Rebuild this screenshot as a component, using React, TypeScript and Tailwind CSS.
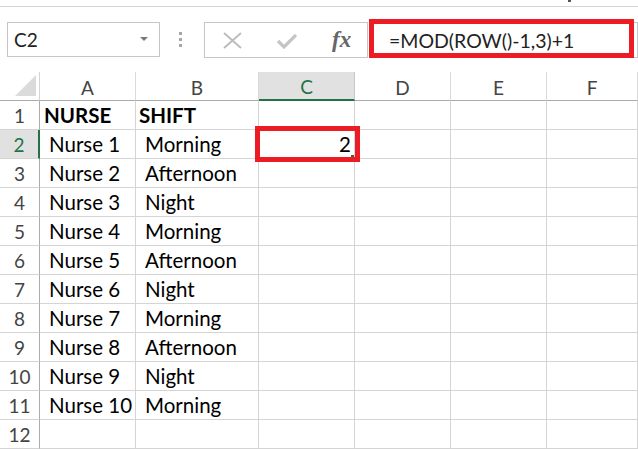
import React from "react";

const cols = [
  { key: "A", w: "w-[96px]" },
  { key: "B", w: "w-[123px]" },
  { key: "C", w: "w-[96px]" },
  { key: "D", w: "w-[96px]" },
  { key: "E", w: "w-[96px]" },
  { key: "F", w: "flex-1" },
];

const data: [string, string][] = [
  ["Nurse 1", "Morning"],
  ["Nurse 2", "Afternoon"],
  ["Nurse 3", "Night"],
  ["Nurse 4", "Morning"],
  ["Nurse 5", "Afternoon"],
  ["Nurse 6", "Night"],
  ["Nurse 7", "Morning"],
  ["Nurse 8", "Afternoon"],
  ["Nurse 9", "Night"],
  ["Nurse 10", "Morning"],
];

function RowHeader({ n, selected }: { n: number; selected?: boolean }) {
  return selected ? (
    <div className="w-[40px] shrink-0 h-full bg-[#e1e1e1] border-r-2 border-r-[#217346] border-b border-b-[#d4d4d4] flex items-center justify-center text-[19px] text-[#217346] pt-[3px]">
      {n}
    </div>
  ) : (
    <div className="w-[40px] shrink-0 h-full border-r border-r-[#ababab] border-b border-b-[#d4d4d4] flex items-center justify-center text-[19px] text-[#444444] pt-[3px]">
      {n}
    </div>
  );
}

export default function App() {
  return (
    <div
      className="relative w-[638px] h-[449px] bg-white overflow-hidden"
      style={{ fontFamily: "Lato, 'Open Sans', sans-serif" }}
    >
      <div className="absolute left-[568px] top-0 w-[3px] h-[2px] bg-[#555555]" />
      <div className="h-[6px]" />
      <div className="h-px bg-[#d5d5d5]" />

      {/* formula bar row */}
      <div className="mt-[15px] flex items-start">
        <div className="ml-[7px] w-[153px] h-[35px] border border-[#c6c6c6] flex items-center justify-between pl-[6px] pr-[11px]">
          <span className="text-[19px] text-[#222] pt-[2px]">C2</span>
          <svg width="8" height="5" viewBox="0 0 8 5">
            <path d="M0 0 L8 0 L4 4 Z" fill="#7a7a7a" />
          </svg>
        </div>
        <div className="ml-[19px] mt-[10px] flex flex-col gap-[3px]">
          <div className="w-[3px] h-[3px] bg-[#a6a6a6]" />
          <div className="w-[3px] h-[3px] bg-[#a6a6a6]" />
          <div className="w-[3px] h-[3px] bg-[#a6a6a6]" />
        </div>
        <div className="ml-[22px] w-[164px] h-[36px] border border-[#c6c6c6] flex items-center">
          <svg className="ml-[18px]" width="19" height="17" viewBox="0 0 19 17">
            <path d="M1 1 L18 16 M18 1 L1 16" stroke="#bdbdbd" strokeWidth="2" fill="none" />
          </svg>
          <svg className="ml-[35px] mt-[3px]" width="20" height="15" viewBox="0 0 20 15">
            <path d="M1 7 L7 13 L19 1" stroke="#c4c4c4" strokeWidth="3.2" fill="none" />
          </svg>
          <span
            className="ml-[35px] text-[23px] italic font-bold text-[#666666] leading-none pb-[2px]"
            style={{ fontFamily: "'Liberation Serif', 'DejaVu Serif', serif" }}
          >
            fx
          </span>
        </div>
        <div className="ml-px w-[269px] h-[36px] border border-[#c6c6c6] flex items-center pl-[19px]">
          <span className="text-[19.5px] text-[#222] pt-[2px]">=MOD(ROW()-1,3)+1</span>
        </div>
      </div>

      {/* grid */}
      <div className="mt-[14px]">
        {/* column header */}
        <div className="flex h-[29px]">
          <div className="w-[40px] shrink-0 h-full border-r border-r-[#d4d4d4] border-b border-b-[#ababab] relative">
            <svg className="absolute left-[15px] top-[3px]" width="21" height="22" viewBox="0 0 21 22">
              <path d="M21 0 L21 21 L0 21 Z" fill="#dbdbdb" />
            </svg>
          </div>
          {cols.map((c) =>
            c.key === "C" ? (
              <div
                key={c.key}
                className={`${c.w} shrink-0 h-full bg-[#e1e1e1] border-r border-r-[#c8c8c8] border-b-2 border-b-[#217346] flex items-center justify-center text-[19px] text-[#217346] pt-[4px]`}
              >
                {c.key}
              </div>
            ) : (
              <div
                key={c.key}
                className={`${c.w} ${c.key === "F" ? "" : "shrink-0"} h-full border-r border-r-[#dadada] border-b border-b-[#ababab] flex items-center justify-center text-[19px] text-[#444444] pt-[4px]`}
              >
                {c.key}
              </div>
            )
          )}
        </div>

        {/* row 1 */}
        <div className="flex h-[29px]">
          <RowHeader n={1} />
          <div className="w-[96px] shrink-0 h-full border-r border-b border-[#d4d4d4] flex items-end pl-[4px] text-[20.5px] leading-[27px] font-bold text-black">
            NURSE
          </div>
          <div className="w-[123px] shrink-0 h-full border-r border-b border-[#d4d4d4] flex items-end pl-[3px] text-[20.5px] leading-[27px] font-bold text-black">
            SHIFT
          </div>
          <div className="w-[96px] shrink-0 h-full border-r border-b border-[#d4d4d4]" />
          <div className="w-[96px] shrink-0 h-full border-r border-b border-[#d4d4d4]" />
          <div className="w-[96px] shrink-0 h-full border-r border-b border-[#d4d4d4]" />
          <div className="flex-1 h-full border-r border-b border-[#d4d4d4]" />
        </div>

        {data.map(([nurse, shift], i) => (
          <div key={i} className="flex h-[29px]">
            <RowHeader n={i + 2} selected={i === 0} />
            <div className="w-[96px] shrink-0 h-full border-r border-b border-[#d4d4d4] flex items-end pl-[9px] text-[20.5px] leading-[27px] text-black">
              {nurse}
            </div>
            <div className="w-[123px] shrink-0 h-full border-r border-b border-[#d4d4d4] flex items-end pl-[9px] text-[20.5px] leading-[27px] text-black">
              {shift}
            </div>
            <div className="w-[96px] shrink-0 h-full border-r border-b border-[#d4d4d4] flex items-end justify-end pr-[3px] text-[20.5px] leading-[27px] text-black relative">
              {i === 0 ? "2" : ""}
              {i === 0 && <div className="absolute right-[0px] bottom-[0px] w-[3px] h-[3px] bg-[#217346]" />}
            </div>
            <div className="w-[96px] shrink-0 h-full border-r border-b border-[#d4d4d4]" />
            <div className="w-[96px] shrink-0 h-full border-r border-b border-[#d4d4d4]" />
            <div className="flex-1 h-full border-r border-b border-[#d4d4d4]" />
          </div>
        ))}

        {/* row 12 */}
        <div className="flex h-[29px]">
          <RowHeader n={12} />
          <div className="w-[96px] shrink-0 h-full border-r border-b border-[#d4d4d4]" />
          <div className="w-[123px] shrink-0 h-full border-r border-b border-[#d4d4d4]" />
          <div className="w-[96px] shrink-0 h-full border-r border-b border-[#d4d4d4]" />
          <div className="w-[96px] shrink-0 h-full border-r border-b border-[#d4d4d4]" />
          <div className="w-[96px] shrink-0 h-full border-r border-b border-[#d4d4d4]" />
          <div className="flex-1 h-full border-r border-b border-[#d4d4d4]" />
        </div>
      </div>

      {/* red annotation boxes */}
      <div className="absolute left-[369px] top-[19px] w-[265px] h-[39px] border-[5px] border-[#ed1c24]" />
      <div className="absolute left-[255px] top-[126px] w-[105px] h-[36px] border-[5px] border-[#ed1c24]" />
    </div>
  );
}
